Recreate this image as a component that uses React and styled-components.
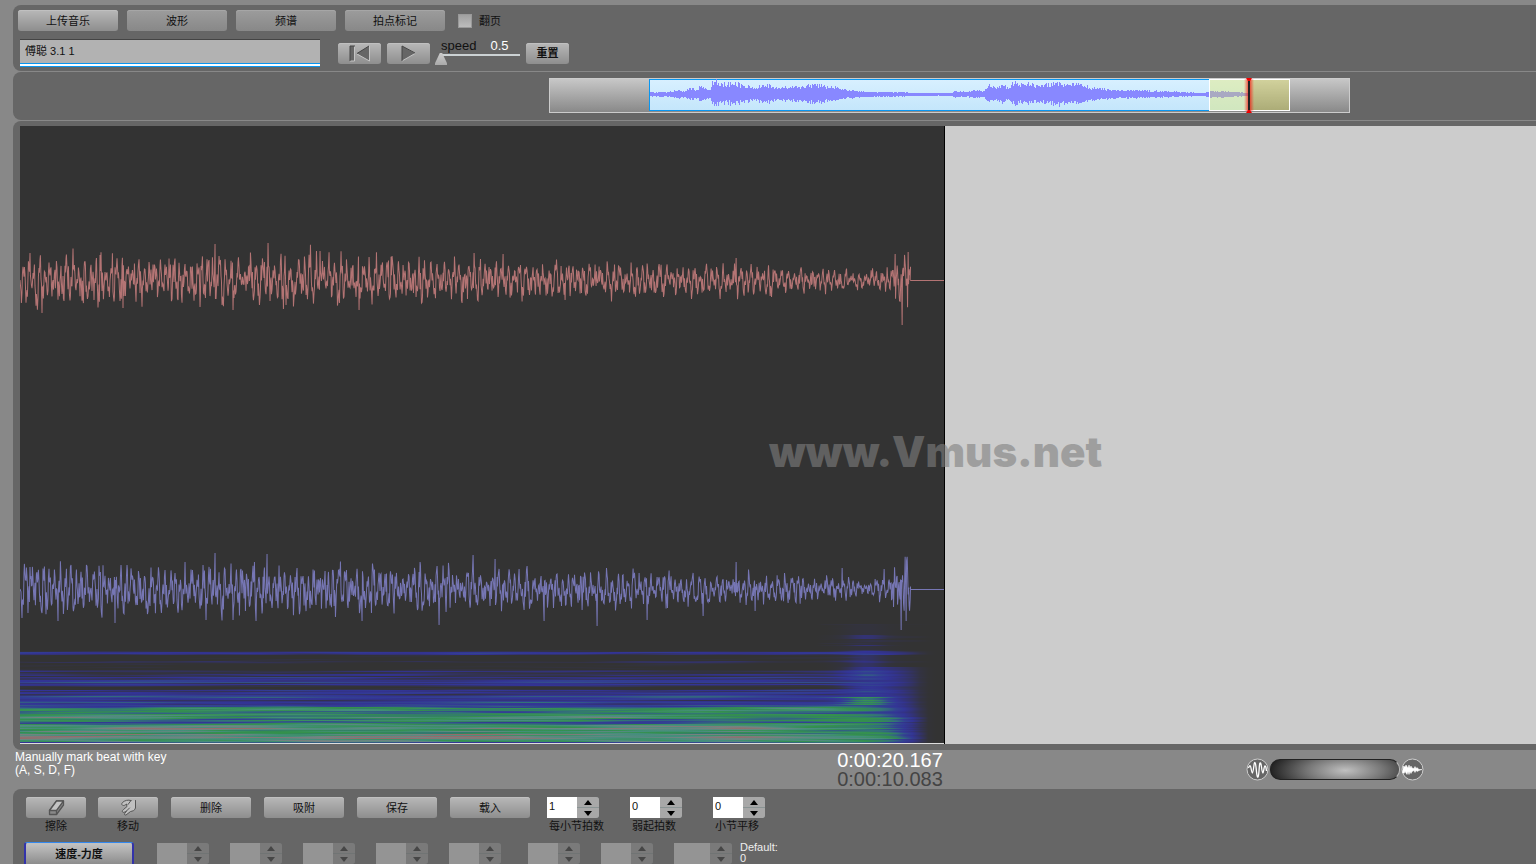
import React from 'react';
import styled, { createGlobalStyle, css } from 'styled-components';

const theme = {
  fonts: {
    ui: '"Liberation Sans", "Noto Sans CJK SC", sans-serif',
    heavy: 'Inter, "DejaVu Sans", sans-serif',
  },
  fontSize: { small: '11px', mid: '12px', large: '13px', time: '20px', mark: '42px' },
  colors: {
    page: '#888',
    panel: '#666',
    dark: '#333',
    light: '#ccc',
    red: '#b47474',
    blue: '#7676b4',
    focus: '#0a96f0',
  },
};

const GlobalStyle = createGlobalStyle`
  * {
    box-sizing: border-box;
  }

  body {
    margin: 0;
    background: ${theme.colors.page};
    font-family: ${theme.fonts.ui};
    font-size: ${theme.fontSize.small};
    color: #111;
  }

  button, input {
    font: inherit;
    color: inherit;
    margin: 0;
    padding: 0;
    border: 0;
  }
`;

const Page = styled.div`
  display: flex;
  flex-direction: column;
  gap: 1px;
  height: 100vh;
  padding-top: 5px;
  overflow: hidden;
`;

const Panel = styled.section`
  margin-left: 13px;
  background: ${theme.colors.panel};
  border-radius: 8px 0 0 8px;
`;

const Toolbar = styled(Panel)`
  padding: 5px 5px 4px;
`;

const Row = styled.div`
  display: flex;
  align-items: center;
  gap: 9px;
`;

const TransportRow = styled(Row)`
  gap: 6px;
  margin-top: 8px;
  padding-left: 2px;
`;

const Button = styled.button`
  width: ${({ $width }) => $width || 100}px;
  height: 21px;
  flex-shrink: 0;
  display: flex;
  align-items: center;
  justify-content: center;
  border-radius: 3px;
  background: linear-gradient(#b8b8b8, #8e8e8e);
  box-shadow: inset 0 1px #c0c0c0;
  line-height: 16px;
  font-weight: ${({ $bold }) => ($bold ? 700 : 400)};

  ${({ $dim }) => $dim && css`
    background: linear-gradient(#9c9c9c, #888);
    box-shadow: inset 0 1px #a6a6a6;
  `}
`;

const CheckLabel = styled.label`
  display: flex;
  align-items: center;
  gap: 7px;
  margin-left: 4px;
  line-height: 16px;
`;

const Checkbox = styled.input`
  appearance: none;
  width: 14px;
  height: 14px;
  background: linear-gradient(#a0a0a0, #bcbcbc);
  border: 1px solid #999;
`;

const TitleInput = styled.input`
  width: 300px;
  height: 28px;
  margin-right: 12px;
  padding: 0 5px 7px;
  background: #b2b2b2;
  border-top: 1px solid #444;
  border-bottom: 1px solid ${theme.colors.focus};
  box-shadow: inset 0 -2px #fff, inset 0 -3px ${theme.colors.focus};
  outline: none;
`;

const Speed = styled.div`
  width: 86px;
  margin: 0 -1px;
  align-self: stretch;
`;

const SpeedLabel = styled.label`
  display: flex;
  gap: 14px;
  padding-left: 6px;
  font-size: ${theme.fontSize.large};
  line-height: 14px;

  output {
    color: #fff;
  }
`;

const Slider = styled.input`
  appearance: none;
  display: block;
  width: 100%;
  height: 12px;
  background: linear-gradient(#ccd2d4, #ccd2d4) 6px 1px / 79px 2px no-repeat;

  &::-webkit-slider-thumb {
    appearance: none;
    width: 12px;
    height: 12px;
    background: linear-gradient(#ccc, #aaa);
    clip-path: polygon(40% 0, 60% 0, 100% 85%, 100% 100%, 0 100%, 0 85%);
  }
`;

const OverviewPanel = styled(Panel)`
  display: grid;
  grid-template-columns: 536fr 801fr 186fr;
  padding: 6px 0 7px;
`;

const OverviewSvg = styled.svg`
  grid-column: 2;
  display: block;
  width: 100%;
  height: 35px;
`;

const StagePanel = styled(Panel)`
  flex: 1;
  display: flex;
  min-height: 0;
  padding: 5px 0 6px 7px;
`;

const Stage = styled.div`
  position: relative;
  flex: 1;
  display: flex;
`;

const PlayedPane = styled.div`
  flex: 61 1 0;
  background: ${theme.colors.dark};
  border-right: 1px solid #000;
`;

const PendingPane = styled.div`
  flex: 39 1 0;
  background: ${theme.colors.light};
`;

const WaveSvg = styled.svg`
  display: block;
  width: 100%;
  height: 100%;
`;

const Watermark = styled.div`
  position: absolute;
  left: 60.4%;
  top: 52.8%;
  transform: translate(-50%, -50%);
  font-family: ${theme.fonts.heavy};
  font-size: ${theme.fontSize.mark};
  font-weight: 900;
  line-height: 48px;
  color: rgba(128, 128, 128, 0.6);
`;

const Status = styled.div`
  display: grid;
  grid-template-columns: minmax(0, 61fr) minmax(0, 39fr);
  height: 37px;
  flex-shrink: 0;
  padding-left: 15px;
`;

const StatusLeft = styled.div`
  display: flex;
  justify-content: space-between;
`;

const Hint = styled.p`
  margin: 0;
  color: #fff;
  font-size: ${theme.fontSize.mid};
  line-height: 13px;
`;

const Times = styled.div`
  font-size: ${theme.fontSize.time};
  line-height: 19px;
  text-align: right;
  color: #444;

  strong {
    display: block;
    color: #fff;
    font-weight: 400;
  }
`;

const StatusRight = styled.div`
  display: flex;
  align-items: center;
  justify-content: flex-end;
  gap: 1px;
  padding: 0 112px 1px 0;
`;

const ZoomButton = styled.button`
  width: 23px;
  height: 23px;
  background: none;

  svg {
    display: block;
  }
`;

const ZoomSlider = styled.input`
  appearance: none;
  width: 130px;
  height: 21px;
  border-radius: 10px;
  background: radial-gradient(ellipse 75px 26px at 58% 55%, #c0c0c0, #777 50%, #222);
  border: 1px solid #222;
  border-right-color: #bbb;

  &::-webkit-slider-thumb {
    appearance: none;
    width: 1px;
    height: 1px;
  }
`;

const EditPanel = styled(Panel)`
  flex-shrink: 0;
  padding: 8px 11px 0;
  border-bottom-left-radius: 0;
`;

const EditRow = styled.div`
  display: flex;
  align-items: flex-start;
  gap: 13px;
  padding-left: 2px;
`;

const Group = styled.div`
  display: flex;
  gap: ${({ $gap }) => $gap}px;
`;

const MeterGroup = styled(Group)`
  margin-left: 4px;
`;

const Tool = styled.label`
  display: flex;
  flex-direction: column;
  align-items: center;
  line-height: 17px;
`;

const Field = styled.label`
  width: 52px;
  line-height: 17px;
  white-space: nowrap;

  > span:last-child {
    padding-left: 2px;
  }
`;

const StepperBox = styled.span`
  display: grid;
  grid-template-columns: 1fr 22px;
  width: ${({ $wide }) => ($wide ? 58 : 52)}px;
  height: 21px;
  opacity: ${({ $off }) => ($off ? 0.3 : 1)};
`;

const StepperInput = styled.input`
  width: 100%;
  height: 21px;
  padding: 0 2px 4px;
  background: #fff;
`;

const StepperKeys = styled.span`
  display: grid;
  grid-template-rows: 1fr 1fr;
  gap: 1px;
  border-radius: 0 3px 3px 0;
  background: #8a9494;
  overflow: hidden;
`;

const Key = styled.button`
  display: flex;
  align-items: center;
  justify-content: center;
  background: #a8a8a8;
`;

const ParamRow = styled.div`
  display: flex;
  align-items: flex-start;
  height: 22px;
  margin-top: 7px;
`;

const ModeButton = styled(Button)`
  width: 110px;
  height: 25px;
  margin-right: 23px;
  border: 2px solid #33a;
  border-top: 1px solid #38e;
  background: linear-gradient(#c4c4c4, #8a8a8a);
`;

const ParamGroup = styled(Group)`
  margin: 1px 27px 0 0;

  &:last-of-type {
    margin-right: 8px;
  }
`;

const Default = styled.p`
  margin: 0;
  color: #eee;
  line-height: 11px;
`;

// small seeded generator so the traces are the same on every render
const seeded = (seed) => () => {
  seed = (seed * 1664525 + 1013904223) % 4294967296;
  return seed / 4294967296;
};

const lerpTable = (table, x) => {
  for (let i = 1; i < table.length; i++) {
    if (x <= table[i][0]) {
      const [x0, y0] = table[i - 1];
      const [x1, y1] = table[i];
      return y0 + ((y1 - y0) * (x - x0)) / (x1 - x0);
    }
  }
  return table[table.length - 1][1];
};

const TRACE_ENV = [[0, 28], [80, 27], [200, 27], [300, 26], [400, 24], [520, 20], [640, 18], [740, 17], [800, 14], [850, 10], [868, 12], [874, 34], [890, 34]];

const tracePath = (seed, centre, spikes) => {
  const rand = seeded(seed);
  let d = `M0 ${centre}`;
  let phase = 0;
  for (let x = 1; x <= 890; x += 1) {
    phase += 0.35 + rand() * 1.5;
    const env = lerpTable(TRACE_ENV, x);
    const swell = 0.75 + 0.25 * Math.sin(x / 3.1 + Math.sin(x / 11) * 2);
    const mid = Math.sin(phase) * 0.65 * swell + (rand() - 0.5) * 0.6;
    const reach = 0.15 + rand() ** 2 * 0.7;
    const side = x % 2 ? 0.5 : -0.5;
    const spike = spikes.find(([sx]) => Math.abs(sx - x) < 1);
    const a = spike ? spike[1] : (mid - reach * side) * env;
    const b = (mid + reach * side) * env;
    d += `L${x} ${(centre + a).toFixed(1)}L${x}.4 ${(centre + b).toFixed(1)}`;
  }
  return `${d}L890 ${centre}`;
};

const RED_TRACE = tracePath(7, 154, [[10, -27], [22, 33], [80, -25], [103, 28], [195, -36], [213, 30], [248, -37], [300, -29], [339, 30], [372, -24], [454, -27], [483, -26], [545, 20], [716, -22], [875, -26], [882, 45], [888, -28]]);
const BLUE_TRACE = tracePath(23, 463, [[10, -22], [38, 32], [95, 34], [195, -36], [213, 31], [247, -35], [342, 32], [400, -27], [419, 36], [453, -34], [475, -30], [524, 32], [577, 37], [627, 31], [683, 27], [716, -27], [735, 22], [822, -21], [864, -20], [881, 41], [886, 32]]);

const OVERVIEW_ENV = [[100, 2], [120, 2], [128, 5], [134, 3], [141, 6], [148, 4], [151, 9], [156, 6], [161, 5], [163, 13], [167, 14], [170, 9], [178, 11], [186, 11], [196, 8], [205, 7], [217, 9], [230, 7], [250, 8], [270, 9], [280, 8], [296, 5], [306, 3], [330, 2], [350, 2], [370, 1], [400, 1], [406, 3], [418, 2], [426, 4], [434, 3], [441, 10], [446, 6], [453, 10], [459, 7], [465, 13], [471, 9], [478, 12], [486, 8], [496, 10], [506, 12], [516, 9], [528, 10], [540, 7], [566, 4], [580, 4], [591, 4], [608, 3], [635, 2], [655, 1], [660, 3], [672, 3], [690, 2], [700, 1]];

const overviewPath = () => {
  const rand = seeded(5);
  let d = '';
  for (let x = 101; x < 700; x++) {
    const a = lerpTable(OVERVIEW_ENV, x) * (0.65 + rand() * 0.5);
    d += `M${x}.5 ${Math.round(16 - a)}V${Math.round(17 + a * (0.7 + rand() * 0.25))}`;
  }
  return d;
};

const OVERVIEW_WAVE = overviewPath();

// one digit per frequency bin, top to bottom
const BINS =
  '0133200000' +
  '0110000000' +
  '1211221322' +
  '3342321001' +
  '3233234433' +
  '2343344566' +
  '6555666765' +
  '6545677787' +
  '6766878887' +
  '774';

const RAMP = [
  [51, 51, 51], [51, 51, 66], [51, 51, 110], [51, 51, 150], [51, 66, 145],
  [51, 115, 120], [51, 145, 75], [68, 142, 125], [115, 132, 130], [150, 106, 106],
];

const rampColor = (v) => {
  const level = Math.max(0, Math.min(9, v));
  const i = Math.min(8, Math.floor(level));
  const t = level - i;
  const rgb = RAMP[i].map((c, k) => Math.round(c + (RAMP[i + 1][k] - c) * t));
  return `rgb(${rgb.join(',')})`;
};

const SPECTRUM = (() => {
  const rand = seeded(91);
  const top = 498;
  const rows = [];
  for (let y = top; y < 617; y++) {
    const base = Number(BINS[y - 524] || 0);
    const burst = y < 524 ? ([509, 510, 511, 512, 519].includes(y) ? 2.2 : 0.7) : base < 3 ? 1.8 : 0.4;
    const green = y >= 571 && y <= 578 ? 2.2 : 0;
    const p = [rand() * 6, rand() * 6];
    const wave = 40 + rand() * 60;
    const stops = [];
    for (let x = 0; x <= 924; x += x < 780 ? 20 : 8) {
      const noise =
        Math.sin(x / wave + p[0]) * 0.5 +
        Math.sin(x / (wave * 0.4) + p[1]) * 0.4 +
        Math.sin(x / 75 + y / 2.6) * 0.5;
      const blob = Math.exp(-(((x - 846) / 24) ** 2));
      let v = base ? base + noise * (base > 4 ? 1.1 : 0.8) : Math.max(0, noise - 0.4);
      if (x > 720 && base > 6) v -= Math.min(1.6, ((x - 720) / 130) * 1.6);
      // everything melts towards blue where the recording stops
      const melt = y > 540 ? Math.max(0, Math.min(1, (x - 810) / 80)) : 0;
      v += (3 - v) * melt * (y > 590 ? 0.35 : 0.7);
      v += blob * (burst + green);
      if (y < 524 && x < 800) v = 0;
      const fade = x < 860 ? 1 : Math.max(0, 1 - ((x - 860) / 50) ** 2);
      stops.push([x / 924, rampColor(v * fade)]);
    }
    rows.push({ y, stops });
  }
  return rows;
})();

const Overview = () => (
  <OverviewSvg viewBox="0 0 801 35" preserveAspectRatio="none">
    <defs>
      <linearGradient id="track" x2="0" y2="1">
        <stop stopColor="#c8c8c8" />
        <stop offset="1" stopColor="#888" />
      </linearGradient>
      <linearGradient id="clip" x2="0" y2="1">
        <stop stopColor="#d8f0ff" />
        <stop offset="1" stopColor="#c4e6fb" />
      </linearGradient>
      <linearGradient id="glow">
        <stop stopColor="#f00" stopOpacity="0" />
        <stop offset="0.5" stopColor="#f00" stopOpacity="0.75" />
        <stop offset="1" stopColor="#f00" stopOpacity="0" />
      </linearGradient>
    </defs>
    <rect x="0.5" y="0.5" width="800" height="34" fill="url(#track)" stroke="#ccc" />
    <rect x="100.5" y="1.5" width="600" height="31" fill="url(#clip)" stroke={theme.colors.focus} />
    <path d={OVERVIEW_WAVE} stroke="#8888ff" />
    <rect x="660.5" y="1.5" width="80" height="31" fill="#e8e850" fillOpacity="0.35" stroke="#fff" />
    <rect x="695" y="1" width="10" height="32" fill="url(#glow)" />
    <path d="M700 1V33" stroke="#222" strokeWidth="2" />
    <path d="M697 0h6l-2 3h-2zM697 35h6l-2 -3h-2z" fill="#e00" />
  </OverviewSvg>
);

const Traces = () => (
  <WaveSvg viewBox="0 0 924 618" preserveAspectRatio="none">
    <defs>
      {SPECTRUM.map(({ y, stops }) => (
        <linearGradient key={y} id={`bin${y}`}>
          {stops.map(([offset, color]) => (
            <stop key={offset} offset={offset} stopColor={color} />
          ))}
        </linearGradient>
      ))}
    </defs>
    {SPECTRUM.map(({ y }) => (
      <rect key={y} y={y} width="924" height="1" fill={`url(#bin${y})`} />
    ))}
    <path d={RED_TRACE} fill="none" stroke={theme.colors.red} />
    <path d={BLUE_TRACE} fill="none" stroke={theme.colors.blue} />
    <path d="M890 154.500H924" stroke={theme.colors.red} />
    <path d="M890 463.500H924" stroke={theme.colors.blue} />
    <rect y="617" width="924" height="1" fill="#ddd" />
  </WaveSvg>
);

const RewindIcon = () => (
  <svg width="22" height="17" viewBox="0 0 22 17" fill="#666">
    <path d="M1 1h5v15H1zM20 1v15L8 8.5z" />
    <path d="M5.500 1v15H1M20.5 1v15L8 9" fill="none" stroke="#c4c4c4" />
    <path d="M1 16V1h5M8 8.500L20 1" fill="none" stroke="#444" />
  </svg>
);

const PlayIcon = () => (
  <svg width="15" height="17" viewBox="0 0 15 17">
    <path d="M1 1v15L14 8.500z" fill="#666" />
    <path d="M1 16L14 8.500" stroke="#c4c4c4" />
    <path d="M14 8L1 1v15" fill="none" stroke="#444" />
  </svg>
);

const EraserIcon = () => (
  <svg width="17" height="16" viewBox="0 0 17 16" stroke="#555" strokeWidth="1.3" strokeLinejoin="round">
    <path d="M1.500 10.500L8.500 1h7v4L8.500 14.500h-7z" fill="#888" />
    <path d="M1.500 10.500L8.500 1h7L8.500 10.500z" fill="#c4c4c4" />
    <path d="M8.500 10.500v4" />
  </svg>
);

const HandIcon = () => (
  <svg width="17" height="17" viewBox="0 0 17 17" stroke="#555" strokeLinejoin="round" strokeLinecap="round">
    <path d="M15.500 1.500v7.500c-1 3-3 3-5 3.500l-4.500 3.500c-1.500.3-2-.7-1.200-1.700L6.500 12c-1.500 1-3.500 2-4 1s0-1.500 1-2.500L7 7.500 6.500 5c-1 .5-1.500 1.500-3 1.500S1 5 2.500 3.500C4.500 1.500 8 .5 11 1.500" fill="#c0c0c0" />
    <path d="M11 1.500L8 5.500M9.500 9l-3 3" fill="none" />
  </svg>
);

const ZoomWaveIcon = ({ dense }) => (
  <svg width="23" height="23" viewBox="0 0 23 23" fill="none" stroke="#fff">
    <circle cx="11.500" cy="11.500" r="10.500" fill="#666" stroke="#ccc" />
    {dense ? (
      <path d="M2.500 8L4 9l1-2 2 3 1-3 1 3 1-2 1 2 2 .5 1-2 1 2 1-1 2 2h3l-3 1-2 1-1-1-1 2-1-2-2 1-1 2-1-2-1 3-1-3-1 3-2-3-1 2-1.500-1z" fill="#fff" strokeWidth="0.500" />
    ) : (
      <path d="M2.500 10c1-3 2-3 2.500 0s1 5 1.500 5 1-4 1.500-8 1.500-3 2 2 1 11 2 10 1-8 1.500-12 1.500-2 2 2 1 6 1.500 6 1-7 2-7 1 2 1.500 5" strokeWidth="1.300" />
    )}
  </svg>
);

const Stepper = ({ id, value = '', off, wide }) => (
  <StepperBox $off={off} $wide={wide}>
    <StepperInput id={id} aria-label={id} defaultValue={value} disabled={off} />
    <StepperKeys>
      <Key type="button" aria-label="+" disabled={off}>
        <svg width="8" height="5"><path d="M0 5L4 0l4 5z" fill="#000" /></svg>
      </Key>
      <Key type="button" aria-label="-" disabled={off}>
        <svg width="8" height="5"><path d="M0 0h8L4 5z" fill="#000" /></svg>
      </Key>
    </StepperKeys>
  </StepperBox>
);

const meters = [
  { id: 'beats', value: '1', label: '每小节拍数' },
  { id: 'pickup', value: '0', label: '弱起拍数' },
  { id: 'shift', value: '0', label: '小节平移' },
];

const App = () => {
  return (
    <Page>
      <GlobalStyle />
      <Toolbar>
        <Row>
          <Button type="button">上传音乐</Button>
          <Button type="button" $dim>波形</Button>
          <Button type="button" $dim>频谱</Button>
          <Button type="button" $dim>拍点标记</Button>
          <CheckLabel>
            <Checkbox type="checkbox" />
            翻页
          </CheckLabel>
        </Row>
        <TransportRow>
          <TitleInput aria-label="title" defaultValue="傅聪 3.1 1" />
          <Button type="button" $width={43} aria-label="rewind"><RewindIcon /></Button>
          <Button type="button" $width={43} aria-label="play"><PlayIcon /></Button>
          <Speed>
            <SpeedLabel htmlFor="speed">
              speed <output>0.5</output>
            </SpeedLabel>
            <Slider id="speed" type="range" min="0.5" max="2" step="0.1" defaultValue="0.5" />
          </Speed>
          <Button type="button" $width={43} $bold>重置</Button>
        </TransportRow>
      </Toolbar>

      <OverviewPanel>
        <Overview />
      </OverviewPanel>

      <StagePanel>
        <Stage>
          <PlayedPane>
            <Traces />
          </PlayedPane>
          <PendingPane />
          <Watermark>www.Vmus.net</Watermark>
        </Stage>
      </StagePanel>

      <Status>
        <StatusLeft>
          <Hint>
            Manually mark beat with key
            <br />
            (A, S, D, F)
          </Hint>
          <Times>
            <strong>0:00:20.167</strong>
            0:00:10.083
          </Times>
        </StatusLeft>
        <StatusRight>
          <ZoomButton type="button" aria-label="zoom in"><ZoomWaveIcon /></ZoomButton>
          <ZoomSlider type="range" aria-label="zoom" />
          <ZoomButton type="button" aria-label="zoom out"><ZoomWaveIcon dense /></ZoomButton>
        </StatusRight>
      </Status>

      <EditPanel>
        <EditRow>
          <Group $gap={12}>
            <Tool>
              <Button type="button" $width={60}><EraserIcon /></Button>
              擦除
            </Tool>
            <Tool>
              <Button type="button" $width={60}><HandIcon /></Button>
              移动
            </Tool>
          </Group>
          {['删除', '吸附', '保存', '载入'].map((text) => (
            <Button key={text} type="button" $width={80}>{text}</Button>
          ))}
          <MeterGroup $gap={31}>
            {meters.map(({ id, value, label }) => (
              <Field key={id} htmlFor={id}>
                <Stepper id={id} value={value} />
                <span>{label}</span>
              </Field>
            ))}
          </MeterGroup>
        </EditRow>
        <ParamRow>
          <ModeButton type="button" $bold>速度-力度</ModeButton>
          <ParamGroup $gap={21}>
            {[1, 2, 3, 4, 5].map((n) => (
              <Stepper key={n} id={`param${n}`} off />
            ))}
          </ParamGroup>
          <ParamGroup $gap={21}>
            <Stepper id="param6" off />
            <Stepper id="param7" off />
            <Stepper id="param8" off wide />
          </ParamGroup>
          <Default>
            Default:
            <br />
            0
          </Default>
        </ParamRow>
      </EditPanel>
    </Page>
  );
};

export default App;
